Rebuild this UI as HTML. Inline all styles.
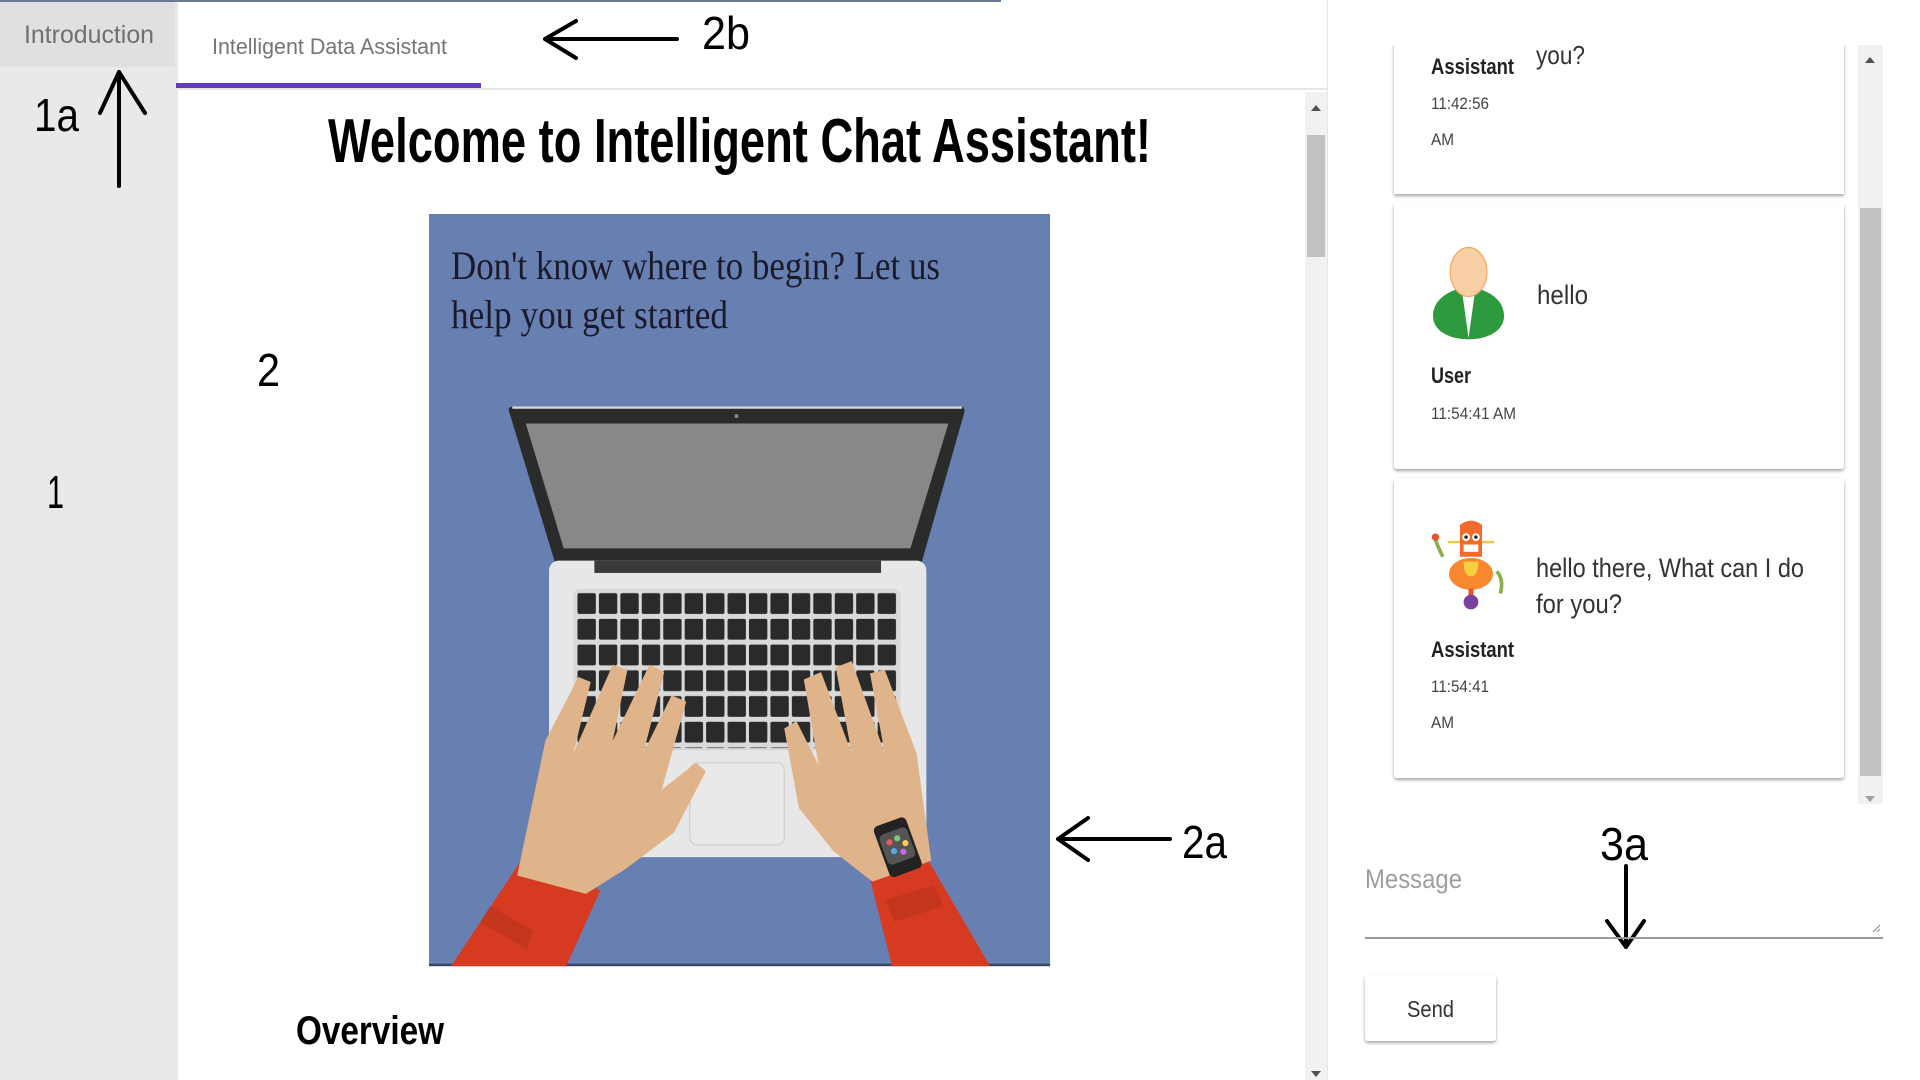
<!DOCTYPE html>
<html><head><meta charset="utf-8"><style>
html,body{margin:0;padding:0;background:#fff;overflow:hidden}
svg{display:block}
text{font-family:"Liberation Sans",sans-serif}
.s{font-family:"Liberation Serif",serif}
</style></head><body>
<svg width="1920" height="1080" viewBox="0 0 1920 1080" xmlns="http://www.w3.org/2000/svg">
<defs>
<filter id="sh" x="-5%" y="-5%" width="110%" height="115%"><feDropShadow dx="0" dy="2" stdDeviation="1.6" flood-color="#000" flood-opacity="0.35"/></filter>
<pattern id="keys" x="120" y="308" width="17.5" height="21" patternUnits="userSpaceOnUse"><rect x="1.2" y="1.5" width="15" height="17" rx="1.5" fill="#2a2a2a"/></pattern>
</defs>
<rect width="1920" height="1080" fill="#fff"/>
<!-- sidebar -->
<rect x="0" y="0" width="178" height="1080" fill="#e9e9e9"/>
<rect x="0" y="0" width="175" height="67" fill="#e0e0e0"/>
<text x="24" y="43" font-size="25" fill="#707070" textLength="130" lengthAdjust="spacingAndGlyphs">Introduction</text>
<!-- top line -->
<rect x="0" y="0" width="1001" height="2" fill="#6b7a99"/>
<!-- tab bar -->
<text x="212" y="54" font-size="22" fill="#757575" textLength="235" lengthAdjust="spacingAndGlyphs">Intelligent Data Assistant</text>
<rect x="178" y="88" width="1149" height="2" fill="#e6e6e6"/>
<rect x="176" y="83" width="305" height="5" fill="#673ab7"/>
<!-- main scrollbar -->
<rect x="1305" y="92" width="22" height="988" fill="#f1f1f1"/>
<rect x="1307" y="135" width="18" height="122" fill="#c1c1c1"/>
<path d="M1311 111 L1316 105 L1321 111 Z" fill="#505050"/>
<path d="M1311 1071 L1316 1077 L1321 1071 Z" fill="#505050"/>
<rect x="1327" y="0" width="1" height="1080" fill="#e6e6e6"/>
<!-- heading -->
<text x="328" y="162" font-size="62" font-weight="bold" fill="#000" textLength="823" lengthAdjust="spacingAndGlyphs">Welcome to Intelligent Chat Assistant!</text>
<!-- image -->
<g transform="translate(429,214) scale(1.225)">
<rect x="0" y="0" width="507" height="614" fill="#6880b1"/>
<rect x="0" y="612" width="507" height="2" fill="#3a4566"/>
<!-- lid -->
<path d="M65 160 Q65 157 70 157 L433 157 Q438 157 437 162 L402 285 L103 285 Z" fill="#2b2b2b"/>
<path d="M68 158 L435 158" stroke="#d9d9d9" stroke-width="2"/>
<path d="M79 171 L424 171 L393 273 L110 273 Z" fill="#888"/>
<circle cx="251" cy="165" r="1.6" fill="#888"/>
<!-- base -->
<rect x="98" y="283" width="308" height="242" rx="8" fill="#e7e7e7"/>
<rect x="135" y="283" width="234" height="10" fill="#3a3a3a"/>
<rect x="118" y="306" width="267" height="132" rx="5" fill="#d9d9d9"/>
<rect x="120" y="308" width="263" height="128" fill="url(#keys)"/>
<rect x="213" y="448" width="77" height="67" rx="6" fill="#e9e9e9" stroke="#cfcfcf"/>
<!-- arms -->
<path d="M18 614 L75 528 L140 552 L112 614 Z" fill="#d63b22"/>
<path d="M50 565 L85 585 L80 600 L42 578 Z" fill="#b8321c" opacity=".6"/>
<path d="M358 535 L402 518 L458 614 L378 614 Z" fill="#d63b22"/>
<path d="M372 560 L412 548 L420 565 L380 578 Z" fill="#b8321c" opacity=".6"/>
<!-- left hand -->
<path d="M72 540 L95 430 L122 378 L132 382 L118 440 L150 368 L162 372 L150 430 L180 368 L192 374 L175 440 L198 393 L210 398 L190 470 L218 448 L226 455 L200 505 L160 535 L128 555 Z" fill="#e0b48a"/>
<!-- right hand -->
<path d="M410 528 L398 440 L372 372 L360 375 L372 440 L345 365 L332 370 L345 440 L320 374 L306 380 L318 450 L300 414 L290 420 L302 485 L330 520 L362 545 Z" fill="#e0b48a"/>
<!-- watch -->
<g transform="rotate(-20 382 515)"><rect x="368" y="495" width="28" height="44" rx="4" fill="#222"/><rect x="370" y="503" width="24" height="26" rx="4" fill="#555"/><circle cx="377" cy="511" r="2.5" fill="#e55"/><circle cx="384" cy="510" r="2.5" fill="#7c7"/><circle cx="389" cy="516" r="2.5" fill="#fc5"/><circle cx="378" cy="519" r="2.5" fill="#5ae"/><circle cx="385" cy="522" r="2.5" fill="#c6e"/></g>
</g>
<text class="s" x="451" y="279" font-size="40" fill="#1a1a2a" textLength="489" lengthAdjust="spacingAndGlyphs">Don't know where to begin? Let us</text>
<text class="s" x="451" y="328" font-size="40" fill="#1a1a2a" textLength="277" lengthAdjust="spacingAndGlyphs">help you get started</text>
<text x="296" y="1044" font-size="40" font-weight="bold" fill="#000" textLength="148" lengthAdjust="spacingAndGlyphs">Overview</text>
<!-- annotations -->
<g font-size="46" fill="#000">
<text x="34" y="131" textLength="45" lengthAdjust="spacingAndGlyphs">1a</text>
<text x="47" y="508" textLength="17" lengthAdjust="spacingAndGlyphs">1</text>
<text x="257" y="386" textLength="23" lengthAdjust="spacingAndGlyphs">2</text>
<text x="702" y="49" textLength="48" lengthAdjust="spacingAndGlyphs">2b</text>
<text x="1182" y="858" textLength="45" lengthAdjust="spacingAndGlyphs">2a</text>
<text x="1633" y="358" textLength="48" lengthAdjust="spacingAndGlyphs">3b</text>
<text x="1600" y="860" textLength="48" lengthAdjust="spacingAndGlyphs">3a</text>
</g>
<g stroke="#000" stroke-width="4" fill="none" stroke-linecap="round" stroke-linejoin="round">
<path d="M119 72 L119 186 M100 113 L119 72 L145 113"/>
<path d="M545 39 L677 39 M576 21 L545 39 L576 58"/>
<path d="M1058 839 L1170 839 M1088 818 L1058 839 L1088 860"/>
<path d="M1626 866 L1626 947 M1607 921 L1626 947 L1644 921"/>
</g>
<!-- chat list -->
<rect x="1394" y="40" width="450" height="154" fill="#fff" filter="url(#sh)"/>
<rect x="1380" y="0" width="470" height="45" fill="#fff"/>
<rect x="1394" y="203" width="450" height="266" rx="3" fill="#fff" filter="url(#sh)"/>
<rect x="1394" y="478" width="450" height="300" rx="3" fill="#fff" filter="url(#sh)"/>
<rect x="1858" y="45" width="25" height="759" fill="#f1f1f1"/>
<rect x="1860" y="208" width="21" height="568" fill="#c1c1c1"/>
<path d="M1865 63 L1870 57 L1875 63 Z" fill="#505050"/>
<path d="M1865 796 L1870 802 L1875 796 Z" fill="#a0a0a0"/>
<g fill="#222">
<text x="1536" y="64" font-size="26" fill="#333" textLength="49" lengthAdjust="spacingAndGlyphs">you?</text>
<text x="1431" y="74" font-size="22" font-weight="bold" textLength="83" lengthAdjust="spacingAndGlyphs">Assistant</text>
<text x="1431" y="109" font-size="17" fill="#444" textLength="58" lengthAdjust="spacingAndGlyphs">11:42:56</text>
<text x="1431" y="145" font-size="17" fill="#444" textLength="23" lengthAdjust="spacingAndGlyphs">AM</text>
<text x="1537" y="304" font-size="27" fill="#333" textLength="51" lengthAdjust="spacingAndGlyphs">hello</text>
<text x="1431" y="383" font-size="22" font-weight="bold" textLength="40" lengthAdjust="spacingAndGlyphs">User</text>
<text x="1431" y="419" font-size="17" fill="#444" textLength="85" lengthAdjust="spacingAndGlyphs">11:54:41 AM</text>
<text x="1536" y="577" font-size="27" fill="#333" textLength="268" lengthAdjust="spacingAndGlyphs">hello there, What can I do</text>
<text x="1536" y="613" font-size="27" fill="#333" textLength="86" lengthAdjust="spacingAndGlyphs">for you?</text>
<text x="1431" y="657" font-size="22" font-weight="bold" textLength="83" lengthAdjust="spacingAndGlyphs">Assistant</text>
<text x="1431" y="692" font-size="17" fill="#444" textLength="58" lengthAdjust="spacingAndGlyphs">11:54:41</text>
<text x="1431" y="728" font-size="17" fill="#444" textLength="23" lengthAdjust="spacingAndGlyphs">AM</text>
</g>
<!-- user avatar -->
<g transform="translate(1433,245) scale(1.225)">
<path d="M0 58 C0 46 10 39 20 36 L29 42 L38 36 C48 39 58 46 58 58 C58 70 45 77 29 77 C13 77 0 70 0 58 Z" fill="#2e9a3e"/>
<path d="M24 40 L29 76 L34 40 Z" fill="#fff"/>
<ellipse cx="29" cy="22" rx="15" ry="20" fill="#f9cfa5" stroke="#f0a860" stroke-width="1"/>
</g>
<!-- robot avatar -->
<g transform="translate(1433,520) scale(1.225)">
<path d="M8 30 Q4 22 2 16" stroke="#8bb04a" stroke-width="3" fill="none"/>
<path d="M52 42 Q58 48 55 60" stroke="#8bb04a" stroke-width="3" fill="none"/>
<circle cx="2" cy="14" r="3" fill="#e8542a"/>
<path d="M12 18 L50 18" stroke="#f3c64a" stroke-width="2"/>
<path d="M22 4 Q31 -3 40 4 L40 30 L22 30 Z" fill="#f26b2a"/>
<circle cx="27" cy="14" r="3.2" fill="#fff"/><circle cx="35" cy="14" r="3.2" fill="#fff"/>
<circle cx="27" cy="14" r="1.4" fill="#222"/><circle cx="35" cy="14" r="1.4" fill="#222"/>
<rect x="25" y="20" width="12" height="6" fill="#fff"/>
<ellipse cx="31" cy="44" rx="18" ry="13" fill="#f7882f"/>
<path d="M25 34 L37 34 Q37 46 31 46 Q25 46 25 34 Z" fill="#f4d03f"/>
<rect x="29" y="56" width="4" height="6" fill="#e8542a"/>
<circle cx="31" cy="67" r="6" fill="#7b3fa0"/>
</g>
<!-- input -->
<text x="1365" y="888" font-size="27" fill="#9e9e9e" textLength="97" lengthAdjust="spacingAndGlyphs">Message</text>
<rect x="1365" y="937" width="518" height="2" fill="#9a9a9a"/>
<path d="M1873 932 L1880 925 M1877 932 L1880 929" stroke="#888" stroke-width="1"/>
<rect x="1365" y="975" width="131" height="66" rx="3" fill="#fff" filter="url(#sh)"/>
<text x="1407" y="1017" font-size="23" fill="#333" textLength="47" lengthAdjust="spacingAndGlyphs">Send</text>
</svg>
</body></html>
